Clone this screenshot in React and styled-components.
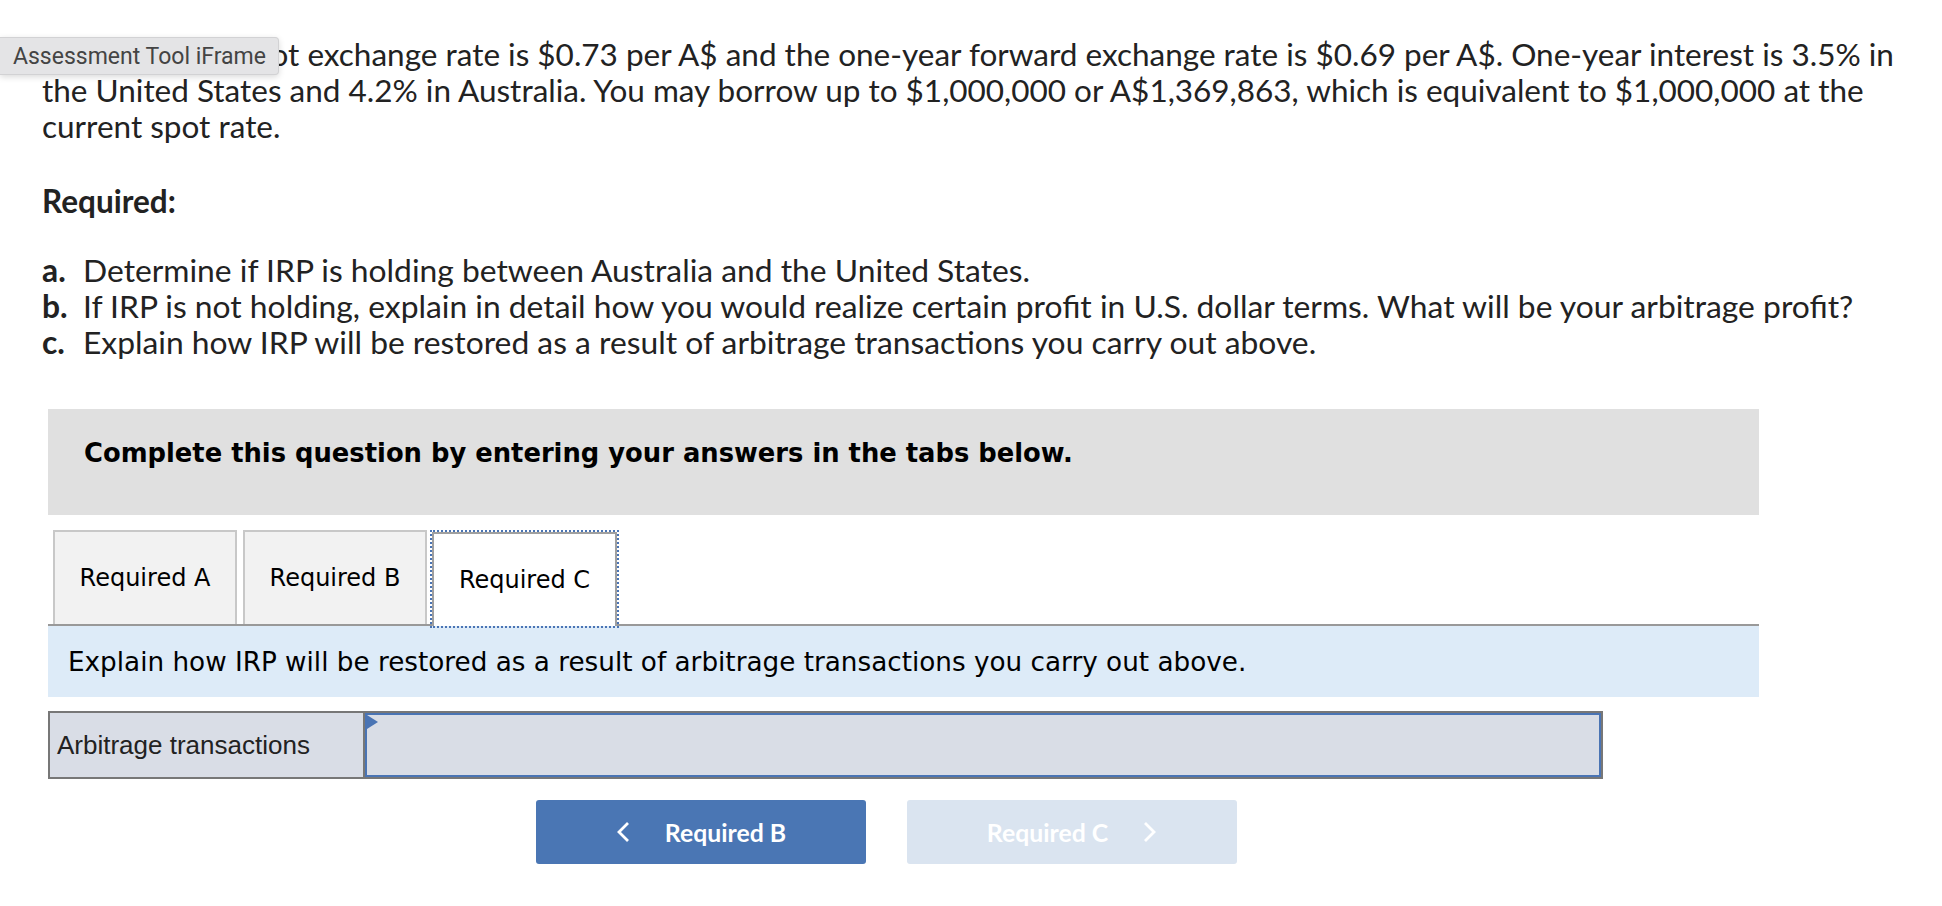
import React from 'react';
import styled, { createGlobalStyle } from 'styled-components';

const GlobalStyle = createGlobalStyle`
  html, body {
    margin: 0;
    padding: 0;
    background: #fff;
  }
`;

const Page = styled.div`
  position: relative;
  padding: 36px 0 40px 42px;
  font-family: Lato, "Liberation Sans", sans-serif;
  color: #222;
`;

const Tooltip = styled.div`
  position: absolute;
  top: 37px;
  left: 0;
  width: 279px;
  height: 38px;
  box-sizing: border-box;
  padding-left: 13px;
  display: flex;
  align-items: center;
  background: #e4e4e6;
  border: 1px solid #d2d2d4;
  border-left: none;
  border-radius: 0 4px 4px 0;
  box-shadow: 0 2px 6px rgba(0, 0, 0, 0.15);
  font-family: Roboto, sans-serif;
  font-size: 23px;
  color: #444;
  z-index: 5;
`;

const Text = styled.div`
  font-size: 31.5px;
  line-height: 36px;
  white-space: nowrap;
`;

const Heading = styled.div`
  margin-top: 39px;
  font-size: 31.5px;
  line-height: 36px;
  font-weight: 700;
`;

const List = styled.div`
  margin-top: 33px;
`;

const ListItem = styled.div`
  display: flex;
  font-size: 31.8px;
  line-height: 36px;
  white-space: nowrap;
`;

const Marker = styled.span`
  width: 41px;
  flex: none;
  font-weight: 700;
`;

const Widget = styled.div`
  margin-left: 6px;
  width: 1711px;
`;

const Instructions = styled.div`
  margin-top: 49px;
  height: 106px;
  box-sizing: border-box;
  padding: 30px 0 0 36px;
  background: #e0e0e0;
  font-family: "DejaVu Sans", Verdana, sans-serif;
  font-weight: 700;
  font-size: 25.8px;
  line-height: 28px;
  color: #000;
`;

const TabRow = styled.div`
  margin-top: 15px;
  display: flex;
  align-items: flex-end;
  padding-left: 5px;
  border-bottom: 2px solid #999;
`;

const Tab = styled.div`
  width: ${p => (p.active ? '185px' : '184px')};
  height: 94px;
  box-sizing: border-box;
  margin-right: ${p => (p.active ? '0' : '6px')};
  margin-left: ${p => (p.active ? '-1px' : '0')};
  margin-bottom: ${p => (p.active ? '-2px' : '0')};
  display: flex;
  align-items: center;
  justify-content: center;
  background: ${p => (p.active ? '#fff' : '#f2f2f2')};
  border: 2px solid ${p => (p.active ? '#a0a0a0' : '#c8c8c8')};
  border-bottom: none;
  outline: ${p => (p.active ? '2px dotted #4a74b4' : 'none')};
  outline-offset: 0;
  font-family: "DejaVu Sans", Verdana, sans-serif;
  font-size: 24px;
  color: #000;
  position: relative;
  z-index: ${p => (p.active ? 1 : 0)};
`;

const Prompt = styled.div`
  height: 71px;
  box-sizing: border-box;
  padding-left: 20px;
  display: flex;
  align-items: center;
  background: #ddebf8;
  font-family: "DejaVu Sans", Verdana, sans-serif;
  font-size: 26.25px;
  color: #000;
`;

const AnswerTable = styled.div`
  margin-top: 14px;
  width: 1555px;
  height: 68px;
  box-sizing: border-box;
  display: flex;
  border: 2px solid #777;
  background: #d9dde6;
`;

const LabelCell = styled.div`
  width: 315px;
  flex: none;
  box-sizing: border-box;
  padding-left: 7px;
  display: flex;
  align-items: center;
  border-right: 2px solid #777;
  font-family: "Liberation Sans", Arial, sans-serif;
  font-size: 26px;
  color: #222;
`;

const InputCell = styled.div`
  position: relative;
  flex: 1;
  border: 2px solid #4a74b4;
  background: #d9dde6;
`;

const CornerFlag = styled.span`
  position: absolute;
  top: 0;
  left: 0;
  width: 0;
  height: 0;
  border-left: 11px solid #4a74b4;
  border-top: 7px solid transparent;
  border-bottom: 7px solid transparent;
`;

const NavRow = styled.div`
  margin-top: 21px;
  margin-left: 488px;
  display: flex;
  gap: 41px;
`;

const NavButton = styled.div`
  width: 330px;
  height: 64px;
  box-sizing: border-box;
  display: flex;
  align-items: center;
  justify-content: center;
  gap: 34px;
  border-radius: 3px;
  background: ${p => (p.disabled ? '#dae4f0' : '#4a76b4')};
  color: #fff;
  font-family: Lato, sans-serif;
  font-weight: 700;
  font-size: 24.8px;
`;

const Chevron = ({ dir }) => (
  <svg width="15" height="22" viewBox="0 0 15 22">
    <polyline
      points={dir === 'left' ? '12,2 3,11 12,20' : '3,2 12,11 3,20'}
      fill="none"
      stroke="#fff"
      strokeWidth="2.8"
      strokeLinejoin="miter"
    />
  </svg>
);

export default function App() {
  return (
    <>
      <GlobalStyle />
      <Page>
        <Tooltip>Assessment Tool iFrame</Tooltip>
        <Text>
          Currently, the spot exchange rate is $0.73 per A$ and the one-year forward exchange rate is $0.69 per A$. One-year interest is 3.5% in
          <br />
          the United States and 4.2% in Australia. You may borrow up to $1,000,000 or A$1,369,863, which is equivalent to $1,000,000 at the
          <br />
          current spot rate.
        </Text>
        <Heading>Required:</Heading>
        <List>
          <ListItem><Marker>a.</Marker>Determine if IRP is holding between Australia and the United States.</ListItem>
          <ListItem><Marker>b.</Marker>If IRP is not holding, explain in detail how you would realize certain profit in U.S. dollar terms. What will be your arbitrage profit?</ListItem>
          <ListItem><Marker>c.</Marker>Explain how IRP will be restored as a result of arbitrage transactions you carry out above.</ListItem>
        </List>

        <Widget>
          <Instructions>Complete this question by entering your answers in the tabs below.</Instructions>
          <TabRow>
            <Tab>Required A</Tab>
            <Tab>Required B</Tab>
            <Tab active>Required C</Tab>
          </TabRow>
          <Prompt>Explain how IRP will be restored as a result of arbitrage transactions you carry out above.</Prompt>
          <AnswerTable>
            <LabelCell>Arbitrage transactions</LabelCell>
            <InputCell>
              <CornerFlag />
            </InputCell>
          </AnswerTable>
          <NavRow>
            <NavButton>
              <Chevron dir="left" />
              <span>Required B</span>
            </NavButton>
            <NavButton disabled>
              <span>Required C</span>
              <Chevron dir="right" />
            </NavButton>
          </NavRow>
        </Widget>
      </Page>
    </>
  );
}
